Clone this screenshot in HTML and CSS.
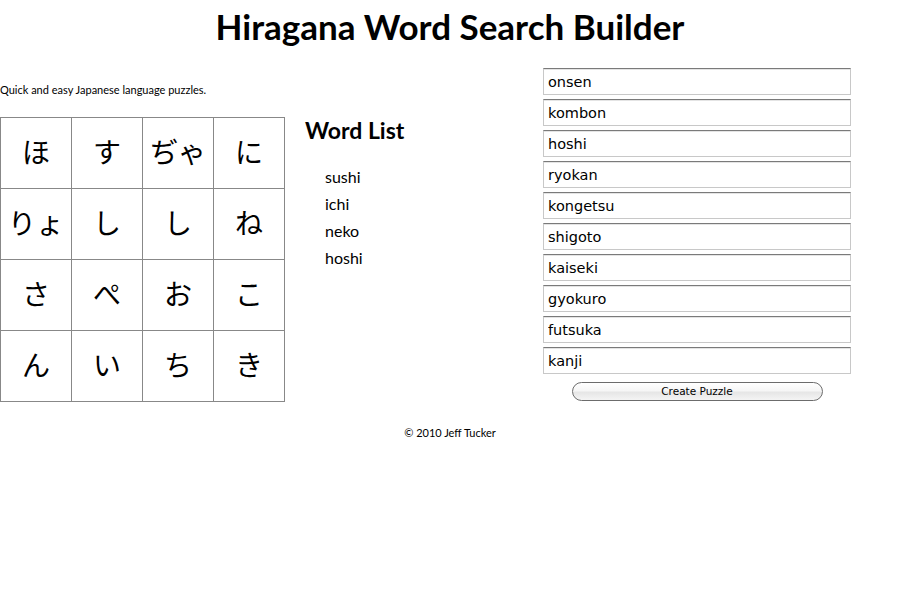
FILE: index.html
```html
<!DOCTYPE html>
<html lang="en">
<head>
<meta charset="utf-8">
<title>Hiragana Word Search Builder</title>
<link rel="stylesheet" href="styles.css">
</head>
<body>
<h1 class="title">Hiragana Word Search Builder</h1>
<div class="main">
  <div class="left">
    <p class="tagline">Quick and easy Japanese language puzzles.</p>
    <table class="grid">
      <tr><td>ほ</td><td>す</td><td>ぢゃ</td><td>に</td></tr>
      <tr><td>りょ</td><td>し</td><td>し</td><td>ね</td></tr>
      <tr><td>さ</td><td>ぺ</td><td>お</td><td>こ</td></tr>
      <tr><td>ん</td><td>い</td><td>ち</td><td>き</td></tr>
    </table>
  </div>
  <div class="words">
    <h2 class="words-title">Word List</h2>
    <ul class="word-list">
      <li>sushi</li>
      <li>ichi</li>
      <li>neko</li>
      <li>hoshi</li>
    </ul>
  </div>
  <form class="builder">
    <input class="word-input" type="text" value="onsen">
    <input class="word-input" type="text" value="kombon">
    <input class="word-input" type="text" value="hoshi">
    <input class="word-input" type="text" value="ryokan">
    <input class="word-input" type="text" value="kongetsu">
    <input class="word-input" type="text" value="shigoto">
    <input class="word-input" type="text" value="kaiseki">
    <input class="word-input" type="text" value="gyokuro">
    <input class="word-input" type="text" value="futsuka">
    <input class="word-input" type="text" value="kanji">
    <button class="create" type="button">Create Puzzle</button>
  </form>
</div>
<footer class="footer">© 2010 Jeff Tucker</footer>
</body>
</html>
```
FILE: styles.css
```css
html, body {
  margin: 0;
  padding: 0;
  background: #fff;
  color: #000;
  font-family: Lato, "Open Sans", sans-serif;
}
.title {
  margin: 0;
  padding-top: 6px;
  height: 60px;
  box-sizing: border-box;
  text-align: center;
  font-size: 35px;
  line-height: 40px;
  font-weight: 700;
}
.main {
  display: flex;
  align-items: flex-start;
  padding-top: 8px;
}
.left {
  width: 285px;
}
.tagline {
  margin: 15px 0 0;
  font-size: 11px;
  line-height: 14px;
  height: 34px;
}
.grid {
  border-collapse: collapse;
}
.grid td {
  width: 70px;
  height: 65px;
  padding: 0 0 5px;
  border: 1px solid #888;
  text-align: center;
  vertical-align: middle;
  font-family: "Noto Sans CJK JP", sans-serif;
  font-size: 28px;
  font-weight: 400;
  line-height: 1;
}
.words {
  margin-left: 20px;
  width: 238px;
}
.words-title {
  margin: 49px 0 0;
  font-size: 23px;
  line-height: 26px;
  font-weight: 700;
}
.word-list {
  list-style: none;
  margin: 20px 0 0;
  padding-left: 20px;
  font-size: 16px;
  line-height: 27px;
}
.builder {
  width: 308px;
  display: flex;
  flex-direction: column;
  gap: 4px;
  margin: 0;
}
.word-input {
  box-sizing: border-box;
  width: 308px;
  height: 27px;
  margin: 0;
  padding: 1px 4px 0;
  border: 1px solid #c8c8c8;
  border-top-color: #7a7a7a;
  box-shadow: inset 0 1px 0 #e4e4e4;
  font-family: "DejaVu Sans", sans-serif;
  font-size: 14.5px;
  color: #000;
  background: #fff;
}
.create {
  align-self: center;
  margin-top: 4px;
  width: 251px;
  height: 19px;
  padding: 0;
  border: 1px solid #6c6c6c;
  border-radius: 10px;
  background: linear-gradient(#ffffff, #f6f6f6 45%, #e6e6e6 55%, #f4f4f4);
  font-family: "DejaVu Sans", sans-serif;
  font-size: 10.5px;
  line-height: 17px;
  color: #000;
}
.footer {
  margin-top: 24px;
  text-align: center;
  font-size: 11px;
  line-height: 14px;
}
```
